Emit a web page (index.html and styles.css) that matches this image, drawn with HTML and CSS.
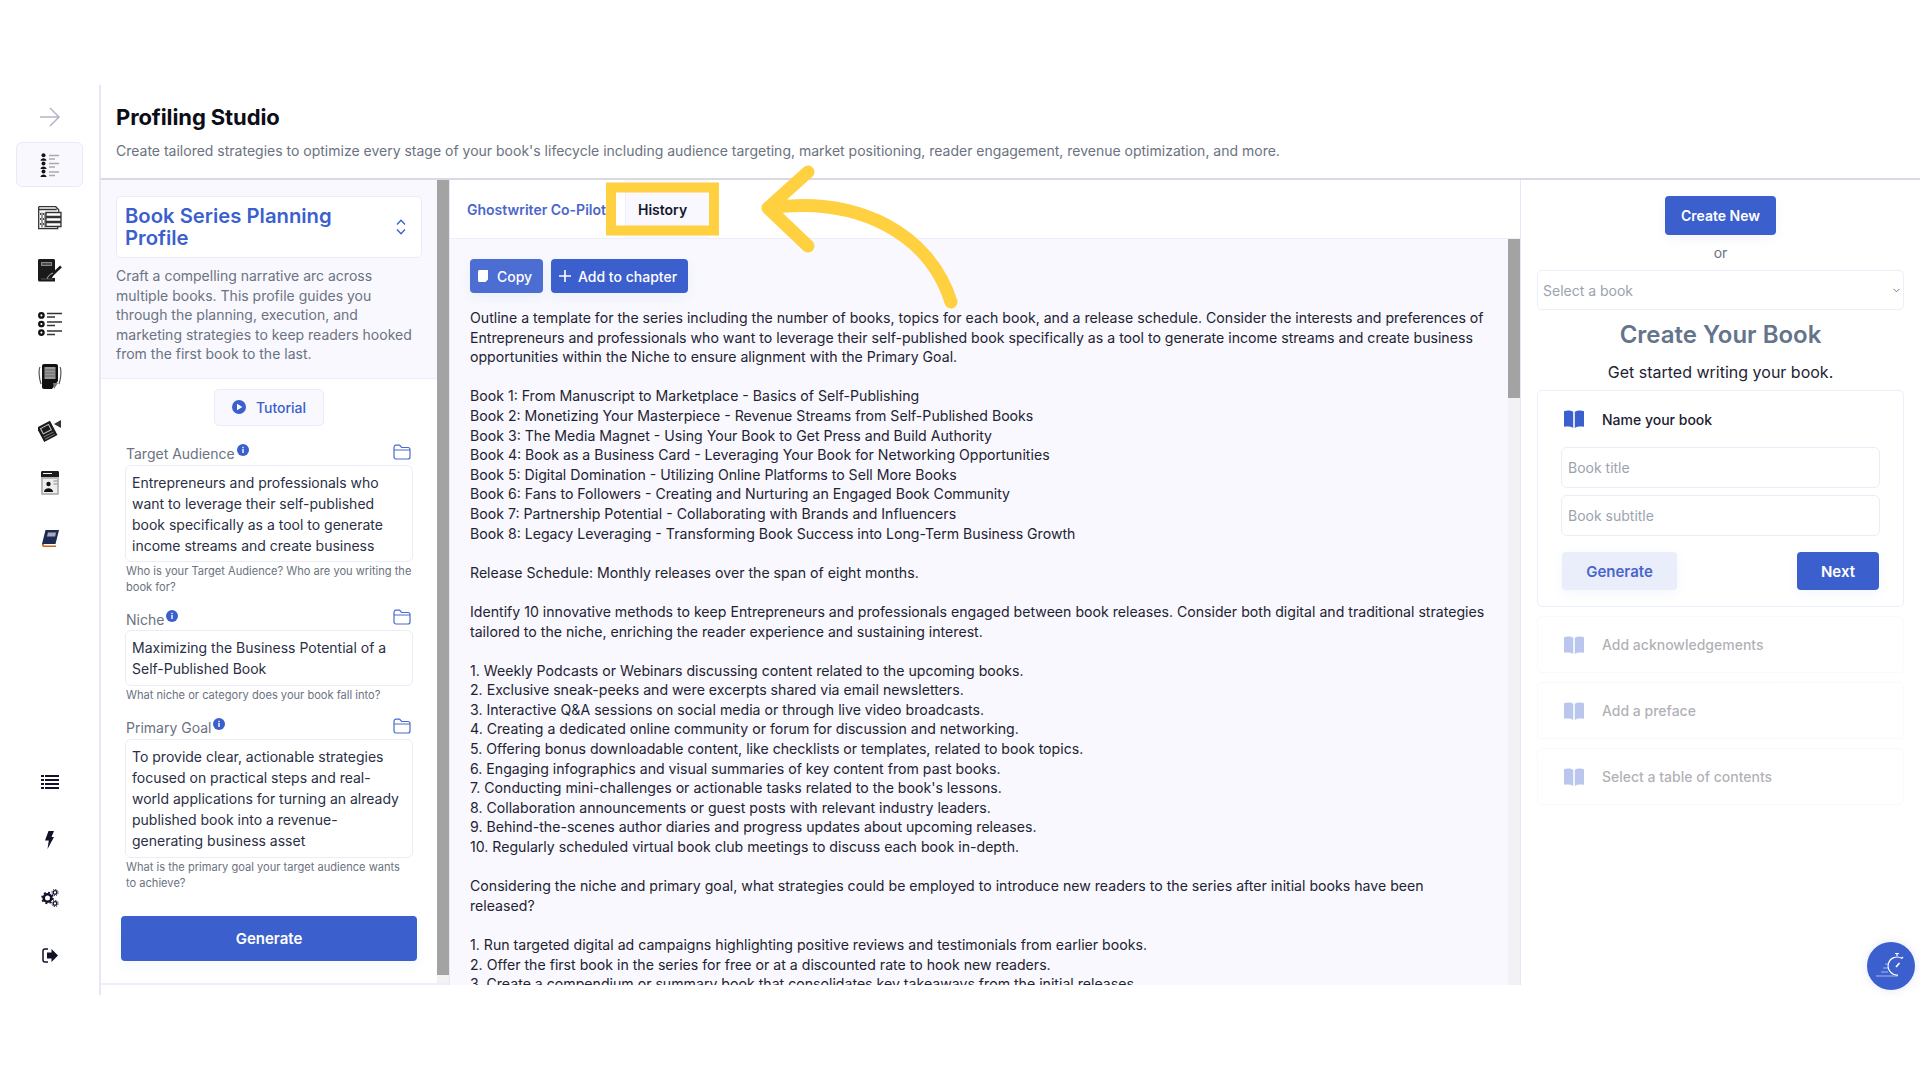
FILE: index.html
```html
<!DOCTYPE html>
<html lang="en">
<head>
<meta charset="utf-8">
<title>Profiling Studio</title>
<link rel="stylesheet" href="styles.css">
</head>
<body>
<svg width="0" height="0" class="defs">
  <symbol id="book" viewBox="0 0 20 18"><path d="M0 1.200C3 .2 7 .4 9.200 1.800V18C7 16.400 3 16.200 0 16.800zM20 1.200C17 .2 13 .4 10.800 1.800V18C13 16.400 17 16.200 20 16.800z"/></symbol>
  <symbol id="folder" viewBox="0 0 18 16"><path d="M1 3.500C1 2 1.800 1.200 3 1.200h3.600l2 2.300H15c1.300 0 2 .8 2 2v7.500c0 1.200-.7 2-2 2H3c-1.200 0-2-.8-2-2zM1 6h16" fill="none" stroke="currentColor" stroke-width="1.200"/></symbol>
  <symbol id="info" viewBox="0 0 12 12"><circle cx="6" cy="6" r="6" fill="#3b5fcd"/><rect x="5.300" y="5" width="1.400" height="4" fill="#fff"/><rect x="5.300" y="2.800" width="1.400" height="1.400" fill="#fff"/></symbol>
</svg>
<div class="app">
  <nav class="sidebar">
    <div class="nav-arrow">
      <svg width="22" height="20" viewBox="0 0 22 20" fill="none" stroke="#b4b6c8" stroke-width="1.500"><path d="M1 10h19M11 1l9 9-9 9"/></svg>
    </div>
    <div class="nav-top">
      <div class="nav-item active">
        <svg width="20" height="24" viewBox="0 0 20 24"><g fill="#151515"><circle cx="3.500" cy="2.200" r="2"/><path d="M.5 7.800c0-3.400 6-3.400 6 0z"/><circle cx="3.500" cy="10.400" r="2"/><path d="M.5 16c0-3.400 6-3.400 6 0z"/><circle cx="3.500" cy="18.600" r="2"/><path d="M.5 24c0-3.400 6-3.400 6 0z"/></g><g stroke="#aaa" stroke-width="1.300"><path d="M9 2.500h10M9 6h6M9 10.500h10M9 14h6M9 19h10M9 22.500h6"/></g></svg>
      </div>
      <div class="nav-item">
        <svg width="24" height="24" viewBox="0 0 24 24" fill="none" stroke="#333" stroke-width="1.300"><path d="M.7.700h17l3 3v2M.7.700v22h19v-2M.7 3.500h18" /><path d="M4 6.500v15M7 6.500v15" stroke-width="1"/><path fill="#fff" d="M8 6.500h15v4H8zM8 11.500h15v4H8zM8 16.500h15v4H8z"/><path d="M2 8h1M2 13h1M2 18h1M5 8h1M5 13h1M5 18h1" stroke="#111"/></svg>
      </div>
      <div class="nav-item">
        <svg width="24" height="24" viewBox="0 0 24 24"><path fill="#1a1a1a" d="M0 1.500C0 .7.700 0 1.500 0h14C16.300 0 17 .7 17 1.500V13l-3 6H17v3.500H1.500C.7 22.500 0 21.800 0 21z"/><path fill="#888" d="M3 3h11v4H3z"/><path fill="#111" d="M4 4.500h9v1H4z"/><path stroke="#1a1a1a" stroke-width="2.500" d="M14 16l9-8.500"/><path stroke="#fff" stroke-width=".7" fill="none" d="M9 20c1-3 3-5 6-6"/><path fill="#555" d="M3 19.500h12v1H3z"/></svg>
      </div>
      <div class="nav-item">
        <svg width="24" height="24" viewBox="0 0 24 24"><g fill="none" stroke="#111" stroke-width="2.300"><circle cx="3.400" cy="3.400" r="2.200"/><circle cx="3.400" cy="12" r="2.200"/><circle cx="3.400" cy="20.600" r="2.200"/></g><g stroke="#333" stroke-width="1.300"><path d="M9 1.500h15M9 5h8M9 10h15M9 13.500h8M9 19h15M9 22.500h8"/></g></svg>
      </div>
      <div class="nav-item">
        <svg width="24" height="26" viewBox="0 0 24 26"><path d="M2 3C.7 5 .7 14 3 20M22 3c1.300 2 1.300 11-1 17" fill="none" stroke="#555" stroke-width="1.200"/><path fill="#111" d="M4 2C4 .9 4.900 0 6 0h12c1.100 0 2 .9 2 2v15l-6 8H6c-1.100 0-2-.9-2-2z"/><path fill="#999" d="M6.500 3h11v12h-11z"/><path stroke="#555" stroke-width=".8" d="M6.500 6h11M6.500 9h11M6.500 12h11"/><path fill="#777" d="M15 19h5l-4 6z"/></svg>
      </div>
      <div class="nav-item">
        <svg width="24" height="24" viewBox="0 0 24 24"><g transform="rotate(-28 10 14)"><path fill="#1a1a1a" d="M2 5h15v16H2z"/><path fill="none" stroke="#ccc" stroke-width="1" d="M5 7.500h9v6H5z"/><path stroke="#777" stroke-width="1" d="M4 16.500h11M4 19h11"/></g><path fill="#333" d="M16 6l7-4v8z"/></svg>
      </div>
      <div class="nav-item">
        <svg width="18" height="24" viewBox="0 0 18 24"><rect width="18" height="24" rx="1.500" fill="#b8b8b8"/><path fill="#1c1c1c" d="M0 1.500C0 .7.700 0 1.500 0h15c.8 0 1.500.7 1.500 1.500V6H0z"/><path fill="#fff" d="M2 2h9v1H2z"/><path fill="#fff" d="M2 8h14v14H2z" opacity=".75"/><circle cx="7.500" cy="13" r="2.200" fill="#111"/><path fill="#111" d="M3 21c0-5 9-5 9 0z"/><path stroke="#888" d="M12.500 10h4M12.500 13h4"/></svg>
      </div>
      <div class="nav-item nav-low">
        <svg width="18" height="17" viewBox="0 0 18 17"><path fill="#1c2c55" d="M4.500 0H18l-3.500 14H1z"/><path fill="#aab" d="M7 2.500h8l-.8 4H6z"/><path fill="#d65f12" d="M1 14C.5 15.500 1.500 17 3 17h12v-1.400H3.500C2.800 15.600 2.500 15 3 14z"/></svg>
      </div>
    </div>
    <div class="nav-bottom">
      <div class="nav-item">
        <svg width="18" height="14" viewBox="0 0 18 14" fill="#111229"><path d="M0 0h3v2H0zM4 0h14v2H4zM0 4h3v2H0zM4 4h14v2H4zM0 8h3v2H0zM4 8h14v2H4zM0 12h3v2H0zM4 12h14v2H4z"/></svg>
      </div>
      <div class="nav-item">
        <svg width="9" height="18" viewBox="0 0 9 18" fill="#111229"><path d="M3.500 0H9L6.500 6H9L2.500 18 3.800 9.500H0z"/></svg>
      </div>
      <div class="nav-item">
        <svg width="18" height="18" viewBox="0 0 18 18"><g fill="none" stroke="#111229"><circle cx="6.500" cy="9" r="3.800" stroke-width="2.600"/><circle cx="6.500" cy="9" r="5.500" stroke-width="1.600" stroke-dasharray="2 2.300"/><circle cx="14" cy="3.500" r="1.800" stroke-width="1.300"/><circle cx="14" cy="3.500" r="3.100" stroke-width="1" stroke-dasharray="1.300 1.100"/><circle cx="14" cy="14.500" r="1.800" stroke-width="1.300"/><circle cx="14" cy="14.500" r="3.100" stroke-width="1" stroke-dasharray="1.300 1.100"/></g></svg>
      </div>
      <div class="nav-item">
        <svg width="16" height="15" viewBox="0 0 16 15"><path fill="none" stroke="#111229" stroke-width="1.500" d="M6 1H3C1.800 1 1 1.800 1 3v9c0 1.200.8 2 2 2h3"/><path fill="#111229" d="M5 4.500h4.500V1L16 7.500 9.500 14v-3.500H5z"/></svg>
      </div>
    </div>
  </nav>

  <main class="main">
    <header class="page-head">
      <h1 class="page-title">Profiling Studio</h1>
      <p class="page-sub">Create tailored strategies to optimize every stage of your book's lifecycle including audience targeting, market positioning, reader engagement, revenue optimization, and more.</p>
    </header>

    <div class="panels">
      <section class="profile">
        <div class="profile-body">
          <div class="profile-top">
            <div class="profile-select">
              <span class="profile-name">Book Series Planning Profile</span>
              <svg width="10" height="16" viewBox="0 0 10 16" fill="none" stroke="#3b5fcd" stroke-width="1.300"><path d="M1 5.500L5 1.200l4 4.300M1 10.500l4 4.300 4-4.300"/></svg>
            </div>
            <p class="profile-desc">Craft a compelling narrative arc across multiple books. This profile guides you through the planning, execution, and marketing strategies to keep readers hooked from the first book to the last.</p>
          </div>
          <div class="profile-form">
            <div class="tutorial">
              <svg width="14" height="14" viewBox="0 0 14 14"><circle cx="7" cy="7" r="7" fill="#3b5fcd"/><path d="M5 3.700L10.300 7 5 10.300z" fill="#fff"/></svg>
              <span>Tutorial</span>
            </div>
            <div class="field">
              <div class="field-label"><span>Target Audience</span><svg class="info" width="12" height="12"><use href="#info"/></svg><svg class="folder" width="18" height="16"><use href="#folder"/></svg></div>
              <div class="field-box clip">Entrepreneurs and professionals who want to leverage their self-published book specifically as a tool to generate income streams and create business opportunities</div>
              <p class="field-help">Who is your Target Audience? Who are you writing the book for?</p>
            </div>
            <div class="field">
              <div class="field-label"><span>Niche</span><svg class="info" width="12" height="12"><use href="#info"/></svg><svg class="folder" width="18" height="16"><use href="#folder"/></svg></div>
              <div class="field-box">Maximizing the Business Potential of a Self-Published Book</div>
              <p class="field-help">What niche or category does your book fall into?</p>
            </div>
            <div class="field">
              <div class="field-label"><span>Primary Goal</span><svg class="info" width="12" height="12"><use href="#info"/></svg><svg class="folder" width="18" height="16"><use href="#folder"/></svg></div>
              <div class="field-box">To provide clear, actionable strategies focused on practical steps and real-world applications for turning an already published book into a revenue-generating business asset</div>
              <p class="field-help">What is the primary goal your target audience wants to&nbsp;achieve?</p>
            </div>
            <div class="btn btn-generate">Generate</div>
          </div>
        </div>
        <div class="scrollbar scrollbar-left"><div class="thumb"></div></div>
      </section>

      <section class="copilot">
        <div class="tabs">
          <div class="tab tab-link">Ghostwriter Co-Pilot</div>
          <div class="tab tab-active">History</div>
        </div>
        <div class="copilot-wrap">
          <div class="copilot-body">
            <div class="actions">
              <div class="btn btn-small btn-copy">
                <svg class="btn-icon" width="10" height="12" viewBox="0 0 10 12" fill="#fff"><path d="M0 1.500C0 .7.700 0 1.500 0H10v9.500L7.500 12H1.500C.7 12 0 11.300 0 10.500z"/></svg>
                <span>Copy</span>
              </div>
              <div class="btn btn-small btn-add">
                <svg class="btn-icon" width="12" height="12" viewBox="0 0 12 12" fill="none" stroke="#fff" stroke-width="1.600"><path d="M6 0v12M0 6h12"/></svg>
                <span>Add to chapter</span>
              </div>
            </div>
            <div class="output">
              <p>Outline a template for the series including the number of books, topics for each book, and a release schedule. Consider the interests and preferences of Entrepreneurs and professionals who want to leverage their self-published book specifically as a tool to generate income streams and create business opportunities within the Niche to ensure alignment with the Primary Goal.</p>
              <p>Book 1: From Manuscript to Marketplace - Basics of Self-Publishing<br>
              Book 2: Monetizing Your Masterpiece - Revenue Streams from Self-Published Books<br>
              Book 3: The Media Magnet - Using Your Book to Get Press and Build Authority<br>
              Book 4: Book as a Business Card - Leveraging Your Book for Networking Opportunities<br>
              Book 5: Digital Domination - Utilizing Online Platforms to Sell More Books<br>
              Book 6: Fans to Followers - Creating and Nurturing an Engaged Book Community<br>
              Book 7: Partnership Potential - Collaborating with Brands and Influencers<br>
              Book 8: Legacy Leveraging - Transforming Book Success into Long-Term Business Growth</p>
              <p>Release Schedule: Monthly releases over the span of eight months.</p>
              <p>Identify 10 innovative methods to keep Entrepreneurs and professionals engaged between book releases. Consider both digital and traditional strategies tailored to the niche, enriching the reader experience and sustaining interest.</p>
              <p>1. Weekly Podcasts or Webinars discussing content related to the upcoming books.<br>
              2. Exclusive sneak-peeks and were excerpts shared via email newsletters.<br>
              3. Interactive Q&amp;A sessions on social media or through live video broadcasts.<br>
              4. Creating a dedicated online community or forum for discussion and networking.<br>
              5. Offering bonus downloadable content, like checklists or templates, related to book topics.<br>
              6. Engaging infographics and visual summaries of key content from past books.<br>
              7. Conducting mini-challenges or actionable tasks related to the book's lessons.<br>
              8. Collaboration announcements or guest posts with relevant industry leaders.<br>
              9. Behind-the-scenes author diaries and progress updates about upcoming releases.<br>
              10. Regularly scheduled virtual book club meetings to discuss each book in-depth.</p>
              <p>Considering the niche and primary goal, what strategies could be employed to introduce new readers to the series after initial books have been released?</p>
              <p>1. Run targeted digital ad campaigns highlighting positive reviews and testimonials from earlier books.<br>
              2. Offer the first book in the series for free or at a discounted rate to hook new readers.<br>
              3. Create a compendium or summary book that consolidates key takeaways from the initial releases.</p>
            </div>
          </div>
          <div class="scrollbar scrollbar-center"><div class="thumb"></div></div>
        </div>
      </section>

      <aside class="builder">
        <div class="btn btn-create">Create New</div>
        <div class="or">or</div>
        <div class="select-book">
          <span>Select a book</span>
          <svg width="7" height="5" viewBox="0 0 7 5" fill="none" stroke="#777" stroke-width="1"><path d="M.5.800l3 3 3-3"/></svg>
        </div>
        <h2 class="builder-title">Create Your Book</h2>
        <p class="builder-sub">Get started writing your book.</p>
        <div class="step step-open">
          <div class="step-row">
            <svg class="step-icon" width="20" height="18"><use href="#book"/></svg>
            <span class="step-name">Name your book</span>
          </div>
          <div class="text-input">Book title</div>
          <div class="text-input">Book subtitle</div>
          <div class="step-actions">
            <div class="btn btn-soft">Generate</div>
            <div class="btn btn-next">Next</div>
          </div>
        </div>
        <div class="step step-dim"><div class="step-row"><svg class="step-icon" width="20" height="18"><use href="#book"/></svg><span class="step-name">Add acknowledgements</span></div></div>
        <div class="step step-dim"><div class="step-row"><svg class="step-icon" width="20" height="18"><use href="#book"/></svg><span class="step-name">Add a preface</span></div></div>
        <div class="step step-dim"><div class="step-row"><svg class="step-icon" width="20" height="18"><use href="#book"/></svg><span class="step-name">Select a table of contents</span></div></div>
      </aside>
    </div>
  </main>
</div>

<div class="fab">
  <svg width="30" height="28" viewBox="0 0 30 28" fill="none" stroke="#fff"><path d="M24 6.500A9 9 0 1 0 20 23" stroke-width="1.200" transform="translate(2 0)"/><path d="M21 1.500v2.500M19 1.500h4M27 5l-1.500 1.500" stroke-width="1.200"/><path d="M20 15l3.500-4" stroke-width="1.600"/><path d="M0 24h22M5 20h7M7 16h5M9 12h3" stroke-width=".7" opacity=".8"/></svg>
</div>

<svg class="annotation" width="1920" height="1080" viewBox="0 0 1920 1080" fill="none" stroke="#ffd040">
  <rect x="611" y="187.500" width="103" height="43" stroke-width="10"/>
  <path d="M951 302C930 235 860 195 768 208M808 172L768 208L808 246" stroke-width="13" stroke-linecap="round" stroke-linejoin="round"/>
</svg>
</body>
</html>
```
FILE: styles.css
```css
* { box-sizing: border-box; }
html, body { margin: 0; height: 1080px; overflow: hidden; background: #fff; }
body { position: relative; font-family: Inter, "Noto Sans", sans-serif; font-size: 14px; color: #1f2433; }
p, h1, h2 { margin: 0; }
.defs { position: absolute; }

.app { display: flex; padding-top: 85px; height: 995px; }

.sidebar { width: 101px; flex: none; height: 910px; border-right: 2px solid #e6e6fa; padding: 20px 16px 17px; display: flex; flex-direction: column; }
.nav-arrow { height: 24px; display: flex; align-items: center; justify-content: center; margin-bottom: 13px; }
.nav-top { display: flex; flex-direction: column; gap: 8px; }
.nav-bottom { margin-top: auto; display: flex; flex-direction: column; gap: 13px; }
.nav-item { height: 45px; display: flex; align-items: center; justify-content: center; border: 1px solid transparent; border-radius: 6px; }
.nav-item.active { background: #f8f8fe; border-color: #e9e9fb; }
.nav-low { padding-top: 5px; }

.main { flex: 1; min-width: 0; height: 900px; display: flex; flex-direction: column; }
.page-head { height: 95px; padding: 19px 16px 0 15px; border-bottom: 2px solid #d9d9e6; }
.page-title { font-size: 22px; font-weight: 700; line-height: 26px; color: #0b0d17; letter-spacing: -.1px; }
.page-sub { margin-top: 11px; line-height: 20px; color: #6b7280; }

.panels { flex: 1; min-height: 0; display: flex; }

.profile { width: 348px; flex: none; display: flex; border-bottom: 2px solid #eeeefb; }
.profile-body { flex: 1; min-width: 0; overflow: hidden; }
.profile-top { background: #f8f8fe; padding: 16px 15px 14px; border-bottom: 1px solid #eeeefb; }
.profile-select { display: flex; align-items: center; justify-content: space-between; background: #fff; border: 1px solid #ececf9; border-radius: 5px; padding: 8px 15px 8px 8px; }
.profile-name { font-size: 20.25px; line-height: 22px; font-weight: 600; color: #3b5fcd; width: 240px; }
.profile-desc { margin-top: 8px; line-height: 19.6px; color: #6b7280; }

.profile-form { display: flex; flex-direction: column; padding: 10px 24px 0; }
.tutorial { align-self: center; height: 37px; width: 110px; display: flex; align-items: center; justify-content: center; gap: 10px; background: #f8f8fe; border: 1px solid #ebebf9; border-radius: 5px; color: #3b5fcd; font-weight: 500; }
.field { margin-top: 17px; }
.field + .field { margin-top: 13.5px; }
.field-label { height: 22px; display: flex; align-items: center; color: #6b7280; padding-left: 1px; }
.info { margin: -7px 0 0 2px; }
.folder { margin-left: auto; margin-top: -4px; margin-right: 2px; color: #4a6ad0; }
.field-box { border: 1px solid #ececf9; border-radius: 6px; padding: 6px; line-height: 21px; background: #fff; color: #2a2f45; }
.clip { height: 97px; overflow: hidden; }
.field-help { margin-top: 1px; padding-left: 1px; font-size: 11.1px; line-height: 16px; color: #6b7280; }
.btn-generate { align-self: center; width: 296px; height: 45px; margin-top: 25px; font-size: 15px; }

.btn { display: flex; align-items: center; justify-content: center; background: #3b5fcd; color: #fff; font-weight: 600; border-radius: 4px; box-shadow: 0 4px 12px rgba(59,95,205,.06); }

.scrollbar { width: 12px; flex: none; background: #f2f2f4; }
.thumb { background: #a3a3a3; }
.scrollbar-left .thumb { height: 795px; }

.copilot { flex: 1; min-width: 0; display: flex; flex-direction: column; border-left: 1px solid #e8e8f8; border-right: 1px solid #e6e6fa; }
.tabs { height: 59px; flex: none; display: flex; border-bottom: 1px solid #eeeefb; }
.tab { display: flex; align-items: center; font-weight: 600; font-size: 14px; }
.tab-link { width: 175px; padding-left: 17px; color: #4a66cc; white-space: nowrap; }
.tab-active { width: 84px; padding-left: 12px; background: #f8f8fe; border-left: 1px solid #eeeefb; color: #14162a; }
.copilot-wrap { flex: 1; min-height: 0; display: flex; }
.copilot-body { flex: 1; min-width: 0; overflow: hidden; background: #f8f8fe; padding: 20px 19px 0 20px; }
.scrollbar-center .thumb { height: 159px; }
.actions { display: flex; gap: 8px; }
.btn-small { height: 34px; justify-content: flex-start; padding-left: 8px; font-size: 14px; font-weight: 500; }
.btn-icon { flex: none; }
.btn-copy { background: #4c6dd2; width: 73px; gap: 9px; }
.btn-add { width: 137px; gap: 7px; }
.output { margin-top: 15px; font-size: 14.13px; line-height: 19.6px; color: #1f2433; }
.output p { margin-bottom: 19.6px; }

.builder { width: 399px; flex: none; padding: 16px 16px 0; display: flex; flex-direction: column; }
.btn-create { align-self: center; width: 111px; height: 39px; }
.or { margin-top: 8px; line-height: 20px; text-align: center; color: #6b7280; }
.select-book { margin-top: 7px; height: 40px; display: flex; align-items: center; justify-content: space-between; padding: 0 3px 0 5px; border: 1px solid #eeeefb; border-radius: 5px; color: #9ca3af; }
.builder-title { margin-top: 9px; font-size: 24px; line-height: 32px; font-weight: 600; text-align: center; color: #64748b; }
.builder-sub { margin-top: 9px; font-size: 16px; line-height: 24px; text-align: center; color: #1f2433; }
.step { border: 1px solid #eeeefb; border-radius: 5px; padding: 0 23px; }
.step-open { margin-top: 6px; padding-top: 18px; padding-bottom: 16px; }
.step-row { display: flex; align-items: center; height: 20px; padding-left: 3px; }
.step-icon { fill: #3b5fcd; flex: none; }
.step-name { margin-left: 18px; font-weight: 500; color: #1c2030; }
.text-input { height: 41px; margin-top: 7px; display: flex; align-items: center; padding-left: 6px; border: 1px solid #ececf9; border-radius: 6px; color: #9ca3af; }
.step-row + .text-input { margin-top: 18px; }
.step-actions { display: flex; justify-content: space-between; margin-top: 16px; padding: 0 1px; }
.btn-soft { width: 115px; height: 38px; background: #e9eefa; color: #4a66cc; font-size: 15px; }
.btn-next { width: 82px; height: 38px; font-size: 15px; }
.step-dim { height: 57px; margin-top: 9px; display: flex; align-items: center; opacity: .35; }
.step-dim .step-row { width: 100%; }

.fab { position: absolute; left: 1867px; top: 942px; width: 48px; height: 48px; border-radius: 50%; background: #3b5fcd; display: flex; align-items: center; justify-content: center; box-shadow: 0 0 10px rgba(59,95,205,.15); }
.annotation { position: absolute; left: 0; top: 0; pointer-events: none; }
```
